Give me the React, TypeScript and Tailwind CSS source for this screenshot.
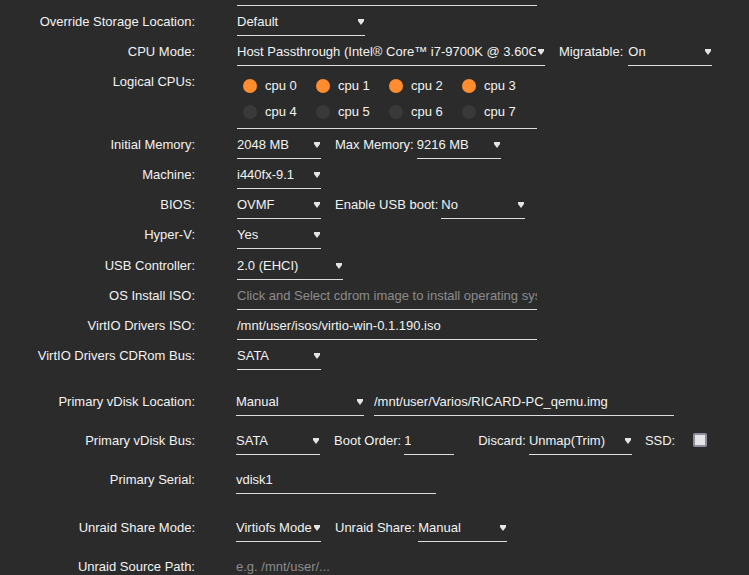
import React from 'react';

const font = { fontFamily: '"Liberation Sans", Arial, sans-serif' };

function Arrow() {
  return (
    <svg width="6" height="6" viewBox="0 0 6 6" className="shrink-0">
      <polygon points="0,0 6,0 6,2 3,6 0,2" fill="#e4e4e4" />
    </svg>
  );
}

function Select({ value, className }: { value: string; className: string }) {
  return (
    <div className={`h-[30px] shrink-0 border-b border-[#dedede] flex items-center gap-[2px] pr-[1px] pt-[2px] ${className}`}>
      <span className="flex-1 overflow-hidden whitespace-nowrap">{value}</span>
      <Arrow />
    </div>
  );
}

function Input({ value, className, placeholder }: { value?: string; className: string; placeholder?: string }) {
  return (
    <div className={`h-[30px] shrink-0 border-b border-[#dedede] flex items-center pt-[2px] ${className}`}>
      <span className={`overflow-hidden whitespace-nowrap ${value ? '' : 'text-[#8c8c8c]'}`}>{value || placeholder}</span>
    </div>
  );
}

function Tag({ children, className = '' }: { children: React.ReactNode; className?: string }) {
  return <span className={`leading-[30px] pt-[1px] whitespace-nowrap shrink-0 ${className}`}>{children}</span>;
}

function Row({ label, children, className = '' }: { label: string; children: React.ReactNode; className?: string }) {
  return (
    <div className={`flex h-[30px] ${className}`}>
      <div className="w-[195px] shrink-0 text-right leading-[30px] pt-[1px] whitespace-nowrap">{label}</div>
      <div className="ml-[42px] flex items-start">{children}</div>
    </div>
  );
}

function Cpu({ n, on }: { n: number; on: boolean }) {
  return (
    <div className="w-[73px] h-[26px] flex items-center gap-[8px]">
      <span className={`w-[14px] h-[14px] rounded-full ${on ? 'bg-[#ff8c2f]' : 'bg-[#393939]'}`} />
      <span>cpu {n}</span>
    </div>
  );
}

export default function App() {
  return (
    <div className="w-[749px] h-[575px] overflow-hidden bg-[#2b2b2b] text-[#f2f2f2] text-[13px]" style={font}>
      <div className="h-[6px] ml-[237px] w-[300px] border-b border-[#dedede]" />

      <Row label="Override Storage Location:">
        <Select value="Default" className="w-[128px]" />
      </Row>

      <Row label="CPU Mode:">
        <Select value="Host Passthrough (Intel® Core™ i7-9700K @ 3.60GHz)" className="w-[308px]" />
        <Tag className="ml-[14px] mr-[5px]">Migratable:</Tag>
        <Select value="On" className="w-[84px]" />
      </Row>

      <div className="flex h-[63px]">
        <div className="w-[195px] shrink-0 text-right leading-[30px] pt-[1px]">Logical CPUs:</div>
        <div className="ml-[42px] w-[300px] border-b border-[#dedede] pt-[7px] pl-[6px]">
          <div className="flex">
            {[0, 1, 2, 3].map(n => <Cpu key={n} n={n} on />)}
          </div>
          <div className="flex">
            {[4, 5, 6, 7].map(n => <Cpu key={n} n={n} on={false} />)}
          </div>
        </div>
      </div>

      <Row label="Initial Memory:">
        <Select value="2048 MB" className="w-[84px]" />
        <Tag className="ml-[14px] mr-[3px]">Max Memory:</Tag>
        <Select value="9216 MB" className="w-[84px]" />
      </Row>

      <Row label="Machine:">
        <Select value="i440fx-9.1" className="w-[84px]" />
      </Row>

      <Row label="BIOS:">
        <Select value="OVMF" className="w-[84px]" />
        <Tag className="ml-[14px] mr-[3px]">Enable USB boot:</Tag>
        <Select value="No" className="w-[84px]" />
      </Row>

      <Row label="Hyper-V:">
        <Select value="Yes" className="w-[84px]" />
      </Row>

      <Row label="USB Controller:" className="mt-[1px]">
        <Select value="2.0 (EHCI)" className="w-[106px]" />
      </Row>

      <Row label="OS Install ISO:">
        <Input placeholder="Click and Select cdrom image to install operating system" className="w-[300px]" />
      </Row>

      <Row label="VirtIO Drivers ISO:">
        <Input value="/mnt/user/isos/virtio-win-0.1.190.iso" className="w-[300px]" />
      </Row>

      <Row label="VirtIO Drivers CDRom Bus:">
        <Select value="SATA" className="w-[84px]" />
      </Row>

      <Row label="Primary vDisk Location:" className="mt-[16px]">
        <div className="-ml-[1px] flex">
          <Select value="Manual" className="w-[128px]" />
          <Input value="/mnt/user/Varios/RICARD-PC_qemu.img" className="w-[300px] ml-[10px]" />
        </div>
      </Row>

      <Row label="Primary vDisk Bus:" className="mt-[9px]">
        <div className="-ml-[1px] flex items-start">
          <Select value="SATA" className="w-[84px]" />
          <Tag className="ml-[14px] mr-[3px]">Boot Order:</Tag>
          <Input value="1" className="w-[50px]" />
          <Tag className="ml-[24px] mr-[3px]">Discard:</Tag>
          <Select value="Unmap(Trim)" className="w-[103px]" />
          <Tag className="ml-[13px]">SSD:</Tag>
          <div className="h-[30px] flex items-center ml-[18px]">
            <span className="w-[14px] h-[14px] rounded-[2px] border-2 border-[#8d8d9c] bg-[#e4e4e4]" />
          </div>
        </div>
      </Row>

      <Row label="Primary Serial:" className="mt-[9px]">
        <div className="-ml-[1px] flex">
          <Input value="vdisk1" className="w-[200px]" />
        </div>
      </Row>

      <Row label="Unraid Share Mode:" className="mt-[18px]">
        <div className="-ml-[1px] flex items-start">
          <Select value="Virtiofs Mode" className="w-[85px]" />
          <Tag className="ml-[14px] mr-[3px]">Unraid Share:</Tag>
          <Select value="Manual" className="w-[89px]" />
        </div>
      </Row>

      <Row label="Unraid Source Path:" className="mt-[9px]">
        <div className="-ml-[1px] flex">
          <Input placeholder="e.g. /mnt/user/..." className="w-[300px]" />
        </div>
      </Row>
    </div>
  );
}
